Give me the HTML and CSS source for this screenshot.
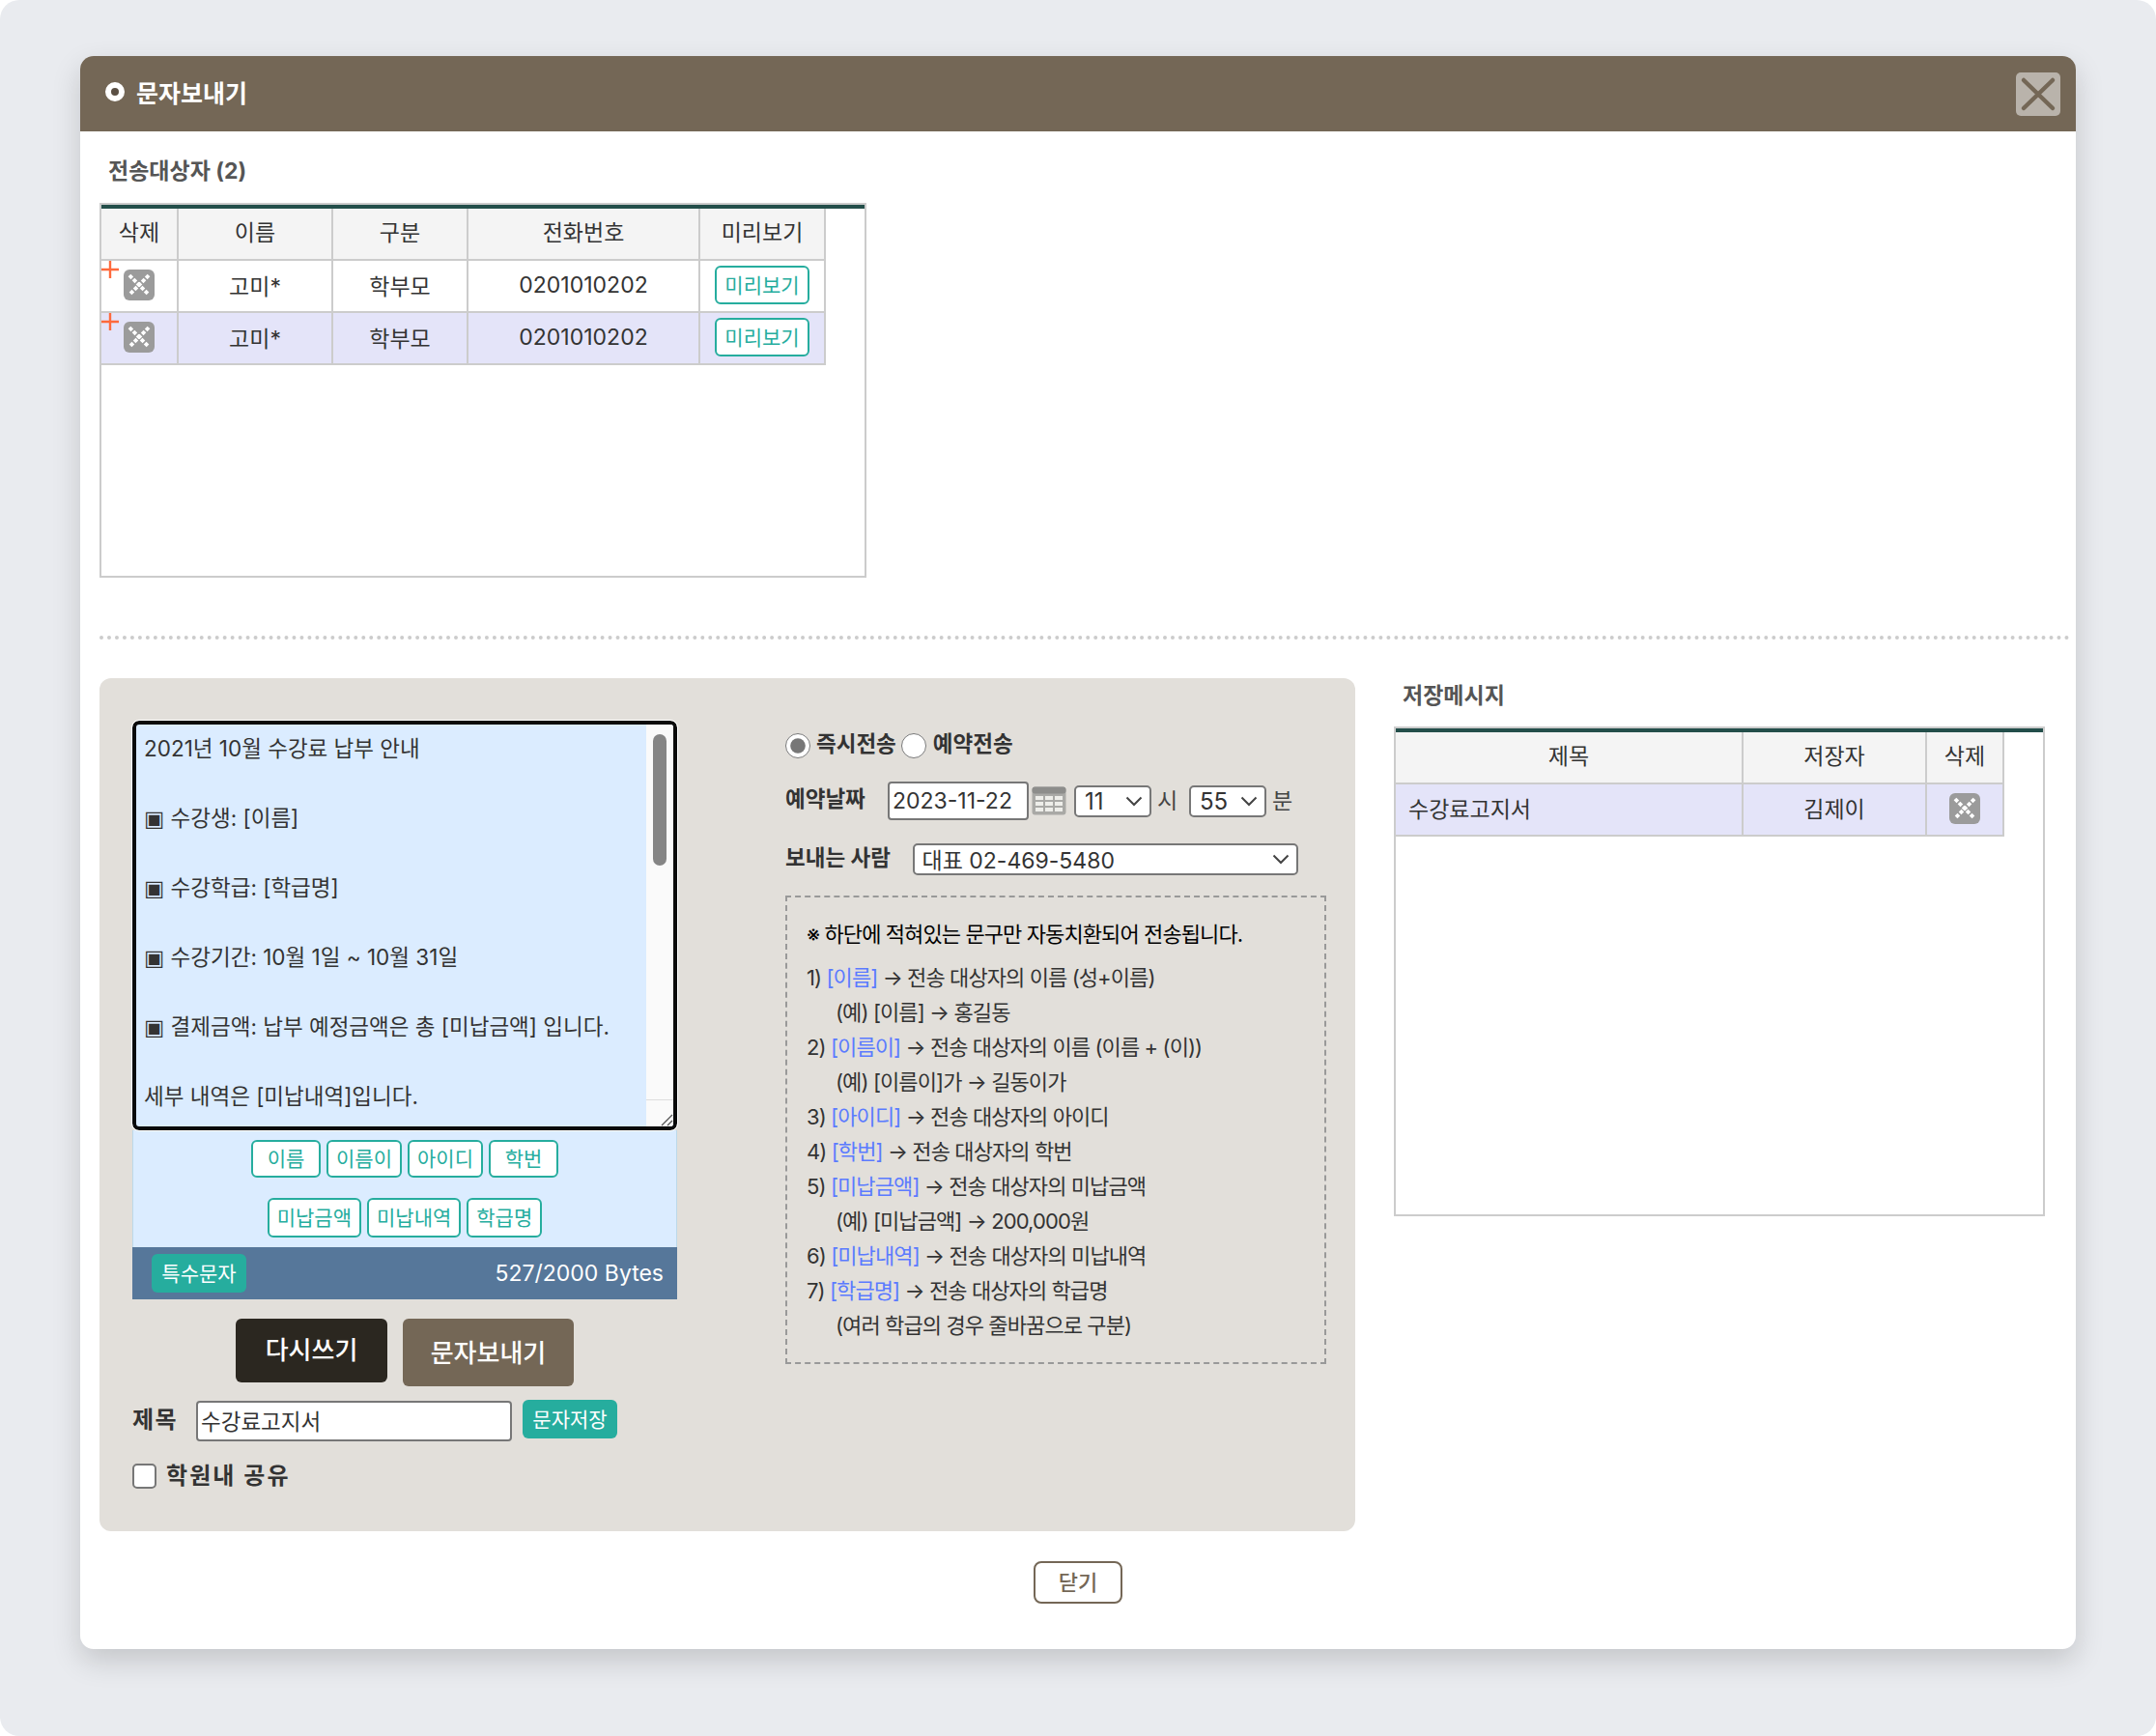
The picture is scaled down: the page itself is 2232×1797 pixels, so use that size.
FILE: index.html
```html
<!DOCTYPE html>
<html lang="ko">
<head>
<meta charset="utf-8">
<title>문자보내기</title>
<link rel="stylesheet" href="styles.css">
</head>
<body>
<div class="page">
  <div class="window">
    <header class="win-head">
      <div class="win-title"><span class="bullet"></span>문자보내기</div>
      <button class="win-close" type="button" aria-label="닫기">
        <svg width="46" height="45" viewBox="0 0 46 45"><rect width="46" height="45" rx="5" fill="#b9b3ab"/><path d="M8 8 L38 37 M38 8 L8 37" stroke="#746756" stroke-width="4.5" stroke-linecap="round"/></svg>
      </button>
    </header>
    <div class="win-body">
      <h3 class="sec-title">전송대상자 (2)</h3>
      <div class="grid-box target-box">
        <div class="grid-inner">
          <table class="grid target-grid">
            <thead><tr><th>삭제</th><th>이름</th><th>구분</th><th>전화번호</th><th>미리보기</th></tr></thead>
            <tbody>
              <tr>
                <td class="del-cell">
                  <svg class="plus" width="18" height="18" viewBox="0 0 18 18"><path d="M9 0V18M0 9H18" stroke="#ff6a3c" stroke-width="2.4"/></svg>
                  <svg class="del-icon" width="32" height="32" viewBox="0 0 32 32"><rect width="32" height="32" rx="6" fill="#9b9b9b"/><path d="M6 6L26 26M26 6L6 26" stroke="#fff" stroke-width="3.8" stroke-dasharray="4 1.7"/></svg>
                </td>
                <td>고미*</td><td>학부모</td><td>0201010202</td>
                <td><button class="tag tag-wide" type="button">미리보기</button></td>
              </tr>
              <tr class="alt">
                <td class="del-cell">
                  <svg class="plus" width="18" height="18" viewBox="0 0 18 18"><path d="M9 0V18M0 9H18" stroke="#ff6a3c" stroke-width="2.4"/></svg>
                  <svg class="del-icon" width="32" height="32" viewBox="0 0 32 32"><rect width="32" height="32" rx="6" fill="#9b9b9b"/><path d="M6 6L26 26M26 6L6 26" stroke="#fff" stroke-width="3.8" stroke-dasharray="4 1.7"/></svg>
                </td>
                <td>고미*</td><td>학부모</td><td>0201010202</td>
                <td><button class="tag tag-wide" type="button">미리보기</button></td>
              </tr>
            </tbody>
          </table>
        </div>
      </div>
      <div class="dots"></div>
      <div class="lower">
        <section class="panel">
          <div class="composer">
            <div class="msg-box">
              <div class="msg-text">
                <p>2021년 10월 수강료 납부 안내</p>
                <p>▣ 수강생: [이름]</p>
                <p>▣ 수강학급: [학급명]</p>
                <p>▣ 수강기간: 10월 1일 ~ 10월 31일</p>
                <p>▣ 결제금액: 납부 예정금액은 총 [미납금액] 입니다.</p>
                <p>세부 내역은 [미납내역]입니다.</p>
              </div>
              <div class="msg-scroll">
                <div class="msg-thumb"></div>
                <div class="msg-corner">
                  <svg width="14" height="14" viewBox="0 0 14 14"><path d="M2 13L13 2M8 13L13 8" stroke="#555" stroke-width="1.3"/></svg>
                </div>
              </div>
            </div>
            <div class="tags">
              <div class="tag-row">
                <button class="tag" type="button">이름</button><button class="tag" type="button">이름이</button><button class="tag" type="button">아이디</button><button class="tag" type="button">학번</button>
              </div>
              <div class="tag-row tag-row-2">
                <button class="tag" type="button">미납금액</button><button class="tag" type="button">미납내역</button><button class="tag" type="button">학급명</button>
              </div>
            </div>
            <div class="byte-bar">
              <button class="solid-btn" type="button">특수문자</button>
              <span class="bytes">527/2000 Bytes</span>
            </div>
            <div class="actions">
              <button class="act act-dark" type="button">다시쓰기</button>
              <button class="act act-brown" type="button">문자보내기</button>
            </div>
            <div class="title-row">
              <label class="title-label" for="msgTitle">제목</label>
              <input class="title-input" id="msgTitle" type="text" value="수강료고지서">
              <button class="solid-btn" type="button">문자저장</button>
            </div>
            <label class="share-row"><input class="share-check" type="checkbox"><span class="share-text">학원내 공유</span></label>
          </div>
          <div class="options">
            <div class="send-mode">
              <input class="radio" type="radio" name="mode" id="m1" checked><label for="m1">즉시전송</label>
              <input class="radio radio-2" type="radio" name="mode" id="m2"><label for="m2">예약전송</label>
            </div>
            <div class="date-row">
              <span class="opt-label date-label">예약날짜</span>
              <input class="date-input" type="text" value="2023-11-22">
              <svg class="cal" width="36" height="30" viewBox="0 0 36 30"><rect x="0.5" y="0.5" width="35" height="29" rx="3" fill="#a9a9a6"/><rect x="0.5" y="0.5" width="35" height="7" rx="3" fill="#8d8d8b"/><g fill="#eeeeea"><rect x="4" y="10" width="8" height="4"/><rect x="14" y="10" width="8" height="4"/><rect x="24" y="10" width="8" height="4"/><rect x="4" y="16" width="8" height="4"/><rect x="14" y="16" width="8" height="4"/><rect x="24" y="16" width="8" height="4"/><rect x="4" y="22" width="8" height="4"/><rect x="14" y="22" width="8" height="4"/><rect x="24" y="22" width="8" height="4"/></g></svg>
              <select class="sel sel-time"><option>11</option></select>
              <span class="unit">시</span>
              <select class="sel sel-time sel-min"><option>55</option></select>
              <span class="unit">분</span>
            </div>
            <div class="sender-row">
              <span class="opt-label sender-label">보내는 사람</span>
              <select class="sel sel-sender"><option>대표 02-469-5480</option></select>
            </div>
            <div class="notice">
              <p class="notice-head">※ 하단에 적혀있는 문구만 자동치환되어 전송됩니다.</p>
              <p>1) <a class="key">[이름]</a> → 전송 대상자의 이름 (성+이름)</p>
              <p class="ex">(예) [이름] → 홍길동</p>
              <p>2) <a class="key">[이름이]</a> → 전송 대상자의 이름 (이름 + (이))</p>
              <p class="ex">(예) [이름이]가 → 길동이가</p>
              <p>3) <a class="key">[아이디]</a> → 전송 대상자의 아이디</p>
              <p>4) <a class="key">[학번]</a> → 전송 대상자의 학번</p>
              <p>5) <a class="key">[미납금액]</a> → 전송 대상자의 미납금액</p>
              <p class="ex">(예) [미납금액] → 200,000원</p>
              <p>6) <a class="key">[미납내역]</a> → 전송 대상자의 미납내역</p>
              <p>7) <a class="key">[학급명]</a> → 전송 대상자의 학급명</p>
              <p class="ex">(여러 학급의 경우 줄바꿈으로 구분)</p>
            </div>
          </div>
        </section>
        <aside class="saved">
          <h3 class="sec-title saved-title">저장메시지</h3>
          <div class="grid-box saved-box">
            <div class="grid-inner">
              <table class="grid saved-grid">
                <thead><tr><th>제목</th><th>저장자</th><th>삭제</th></tr></thead>
                <tbody>
                  <tr class="alt">
                    <td class="left txt">수강료고지서</td><td class="txt">김제이</td>
                    <td><svg class="del-icon" width="32" height="32" viewBox="0 0 32 32"><rect width="32" height="32" rx="6" fill="#9b9b9b"/><path d="M6 6L26 26M26 6L6 26" stroke="#fff" stroke-width="3.8" stroke-dasharray="4 1.7"/></svg></td>
                  </tr>
                </tbody>
              </table>
            </div>
          </div>
        </aside>
      </div>
      <div class="foot"><button class="close-btn" type="button">닫기</button></div>
    </div>
  </div>
</div>
</body>
</html>
```
FILE: styles.css
```css
* { box-sizing: border-box; }
html, body { margin: 0; padding: 0; background: #fff; }
body { font-family: Inter, "Noto Sans CJK KR", sans-serif; color: #333; font-size: 22px; }
button, input, select { font-family: inherit; }
p, h3 { margin: 0; }

.page { width: 2232px; height: 1797px; padding: 58px 83px 90px; background: #e9ebef; border-radius: 20px; }
.window { height: 1649px; background: #fff; border-radius: 14px; box-shadow: 0 12px 30px rgba(0, 0, 0, 0.16); overflow: hidden; }

.win-head { height: 78px; background: #746756; display: flex; align-items: center; justify-content: space-between; padding: 0 16px 0 26px; }
.win-title { display: flex; align-items: center; gap: 12px; padding-bottom: 5px; color: #fff; font-size: 25px; font-weight: 700; letter-spacing: 0; }
.bullet { width: 20px; height: 20px; border-radius: 50%; border: 6px solid #fff; background: #5b5044; }
.win-close { border: 0; padding: 0; background: none; width: 46px; height: 45px; display: block; }
.win-close svg { display: block; }

.win-body { padding: 26px 0 0 20px; }
.sec-title { font-size: 23px; line-height: 30px; font-weight: 700; color: #555; padding-left: 9px; }

.grid-box { border: 2px solid #ccc; background: #fff; }
.grid-inner { border-top: 4px solid #234e4a; height: 100%; }
.target-box { width: 794px; height: 388px; margin-top: 18px; }
.saved-box { width: 674px; height: 507px; margin-top: 17px; }

.grid { border-collapse: separate; border-spacing: 0; table-layout: fixed; color: #333; }
.grid th, .grid td { height: 54px; padding: 0 0 2px; text-align: center; font-size: 23px; font-weight: 400; border-right: 2px solid #ccc; border-bottom: 2px solid #ccc; }
.grid th { background: #f4f4f4; padding-bottom: 6px; }
.grid .alt td { background: #e4e4f9; }
.grid .txt { padding-bottom: 4px; }
.grid .left { text-align: left; padding-left: 13px; }
.target-grid { width: 750px; }
.target-grid th:nth-child(1) { width: 80px; }
.target-grid th:nth-child(2) { width: 160px; }
.target-grid th:nth-child(3) { width: 140px; }
.target-grid th:nth-child(4) { width: 240px; }
.target-grid th:nth-child(5) { width: 130px; }
.saved-grid { width: 630px; }
.saved-grid th:nth-child(1) { width: 360px; }
.saved-grid th:nth-child(2) { width: 190px; }
.saved-grid th:nth-child(3) { width: 80px; }

.del-cell { position: relative; }
.plus { position: absolute; left: 0; top: 0; }
.del-icon { display: block; margin: 0 auto; }

.tag { height: 40px; min-width: 72px; padding: 0 8px 3px; background: #fff; border: 2px solid #26ad9e; border-radius: 6px; color: #26ad9e; font-size: 21px; }
.tag-wide { width: 98px; padding: 0 0 2px; display: block; margin: 0 auto; }

.dots { width: 2041px; height: 0; border-top: 4px dotted #ccc; margin-top: 60px; }

.lower { display: flex; margin-top: 40px; }
.panel { width: 1300px; height: 883px; background: #e2dfda; border-radius: 12px; display: flex; padding: 44px 0 0 34px; }
.composer { width: 564px; }

.msg-box { height: 424px; display: flex; border: 4px solid #0a0a0a; border-radius: 7px; outline: 1px solid #fff; overflow: hidden; background: #dbecff; }
.msg-text { flex: 1; overflow: hidden; padding: 7px 8px 0; font-family: Inter, "DejaVu Sans", "Noto Sans CJK KR", sans-serif; font-size: 22.5px; line-height: 36px; color: #333; }
.msg-text p { margin-bottom: 36px; white-space: nowrap; }
.msg-scroll { width: 28px; background: #fafafa; display: flex; flex-direction: column; justify-content: space-between; padding-top: 10px; }
.msg-thumb { width: 14px; height: 136px; margin-left: 7px; border-radius: 7px; background: #858585; }
.msg-corner { height: 28px; border-top: 1px solid #ddd; display: flex; align-items: flex-end; justify-content: flex-end; }
.msg-corner svg { display: block; }

.tags { height: 121px; background: #dbecff; border-left: 1px solid #bcd9ea; border-right: 1px solid #bcd9ea; padding-top: 10px; }
.tag-row { display: flex; justify-content: center; gap: 6px; }
.tag-row .tag { height: 39px; }
.tag-row-2 { margin-top: 21px; }
.tag-row-2 .tag { height: 41px; }

.byte-bar { height: 54px; background: #56779a; display: flex; align-items: center; justify-content: space-between; padding: 0 14px 0 20px; }
.bytes { color: #fff; font-size: 23px; }
.solid-btn { width: 98px; height: 40px; padding: 0 0 2px; border: 0; border-radius: 6px; background: #26ad9e; color: #fff; font-size: 21px; }

.actions { display: flex; justify-content: center; align-items: flex-start; gap: 16px; margin-top: 20px; }
.act { border: 0; border-radius: 6px; color: #fff; font-size: 26px; font-weight: 500; }
.act-dark { width: 157px; height: 66px; padding: 0 0 6px; background: #2b2720; }
.act-brown { width: 177px; height: 70px; padding: 0 0 4px; background: #746756; }

.title-row { display: flex; align-items: flex-start; margin-top: 14px; }
.title-label { width: 66px; font-size: 24px; font-weight: 700; line-height: 42px; color: #333; letter-spacing: 1.4px; }
.title-input { width: 327px; height: 42px; margin: 1px 11px 0 0; padding: 0 3px 2px; border: 2px solid #777; border-radius: 4px; background: #fff; font-size: 22.5px; color: #333; }

.share-row { display: flex; align-items: center; height: 26px; margin-top: 23px; font-size: 24px; font-weight: 700; color: #333; letter-spacing: 2.1px; }
.share-text { padding-bottom: 6px; }
.share-check { appearance: none; width: 25px; height: 26px; margin: 0 10px 0 0; background: #fff; border: 2px solid #777; border-radius: 5px; }

.options { width: 560px; margin-left: 112px; padding-top: 13px; }
.send-mode { display: flex; align-items: center; height: 26px; font-size: 22.5px; font-weight: 700; color: #333; }
.send-mode label { padding-bottom: 8px; }
.radio { width: 26px; height: 26px; margin: 0 6px 0 0; accent-color: #777; }
.radio-2 { margin: 0 7px 0 5px; }

.date-row { display: flex; align-items: center; height: 40px; margin-top: 24px; }
.opt-label { padding-bottom: 8px; font-size: 22.5px; font-weight: 700; color: #333; }
.date-label { width: 106px; }
.date-input { width: 146px; height: 40px; padding: 0 3px; border: 2px solid #777; border-radius: 4px; background: #fff; font-size: 23px; color: #333; }
.cal { margin: 0 8px 0 3px; }
.sel { appearance: none; border: 2px solid #777; border-radius: 5px; color: #333; font-size: 24px; background: #fff url("data:image/svg+xml,%3Csvg xmlns='http://www.w3.org/2000/svg' width='18' height='11' viewBox='0 0 18 11'%3E%3Cpath d='M1.5 1.5L9 9L16.5 1.5' fill='none' stroke='%23444' stroke-width='2'/%3E%3C/svg%3E") no-repeat right 7px center; }
.sel-time { width: 80px; height: 33px; padding: 0 0 0 9px; }
.sel-min { margin-left: 13px; }
.unit { width: 20px; margin-left: 6px; padding-bottom: 5px; font-size: 23px; color: #444; }

.sender-row { display: flex; align-items: center; height: 33px; margin-top: 24px; }
.sender-label { width: 131.5px; }
.sel-sender { width: 399px; height: 33px; padding: 2px 0 0 8px; font-size: 23px; }

.notice { height: 485px; margin-top: 21px; padding: 20px 20px; border: 2px dashed #999; font-size: 22px; line-height: 36px; letter-spacing: -0.9px; color: #333; }
.notice p { white-space: nowrap; }
.notice .notice-head { color: #000; margin-bottom: 9px; }
.notice .ex { padding-left: 30px; }
.key { color: #5b7bff; }

.saved { margin-left: 40px; }
.saved-title { padding-left: 9px; margin-top: 3px; }

.foot { display: flex; justify-content: center; margin: 31px 0 0 -20px; }
.close-btn { width: 92px; height: 44px; padding: 0 0 4px; background: #fff; border: 2px solid #746756; border-radius: 8px; color: #746756; font-size: 22px; font-weight: 500; }
```
